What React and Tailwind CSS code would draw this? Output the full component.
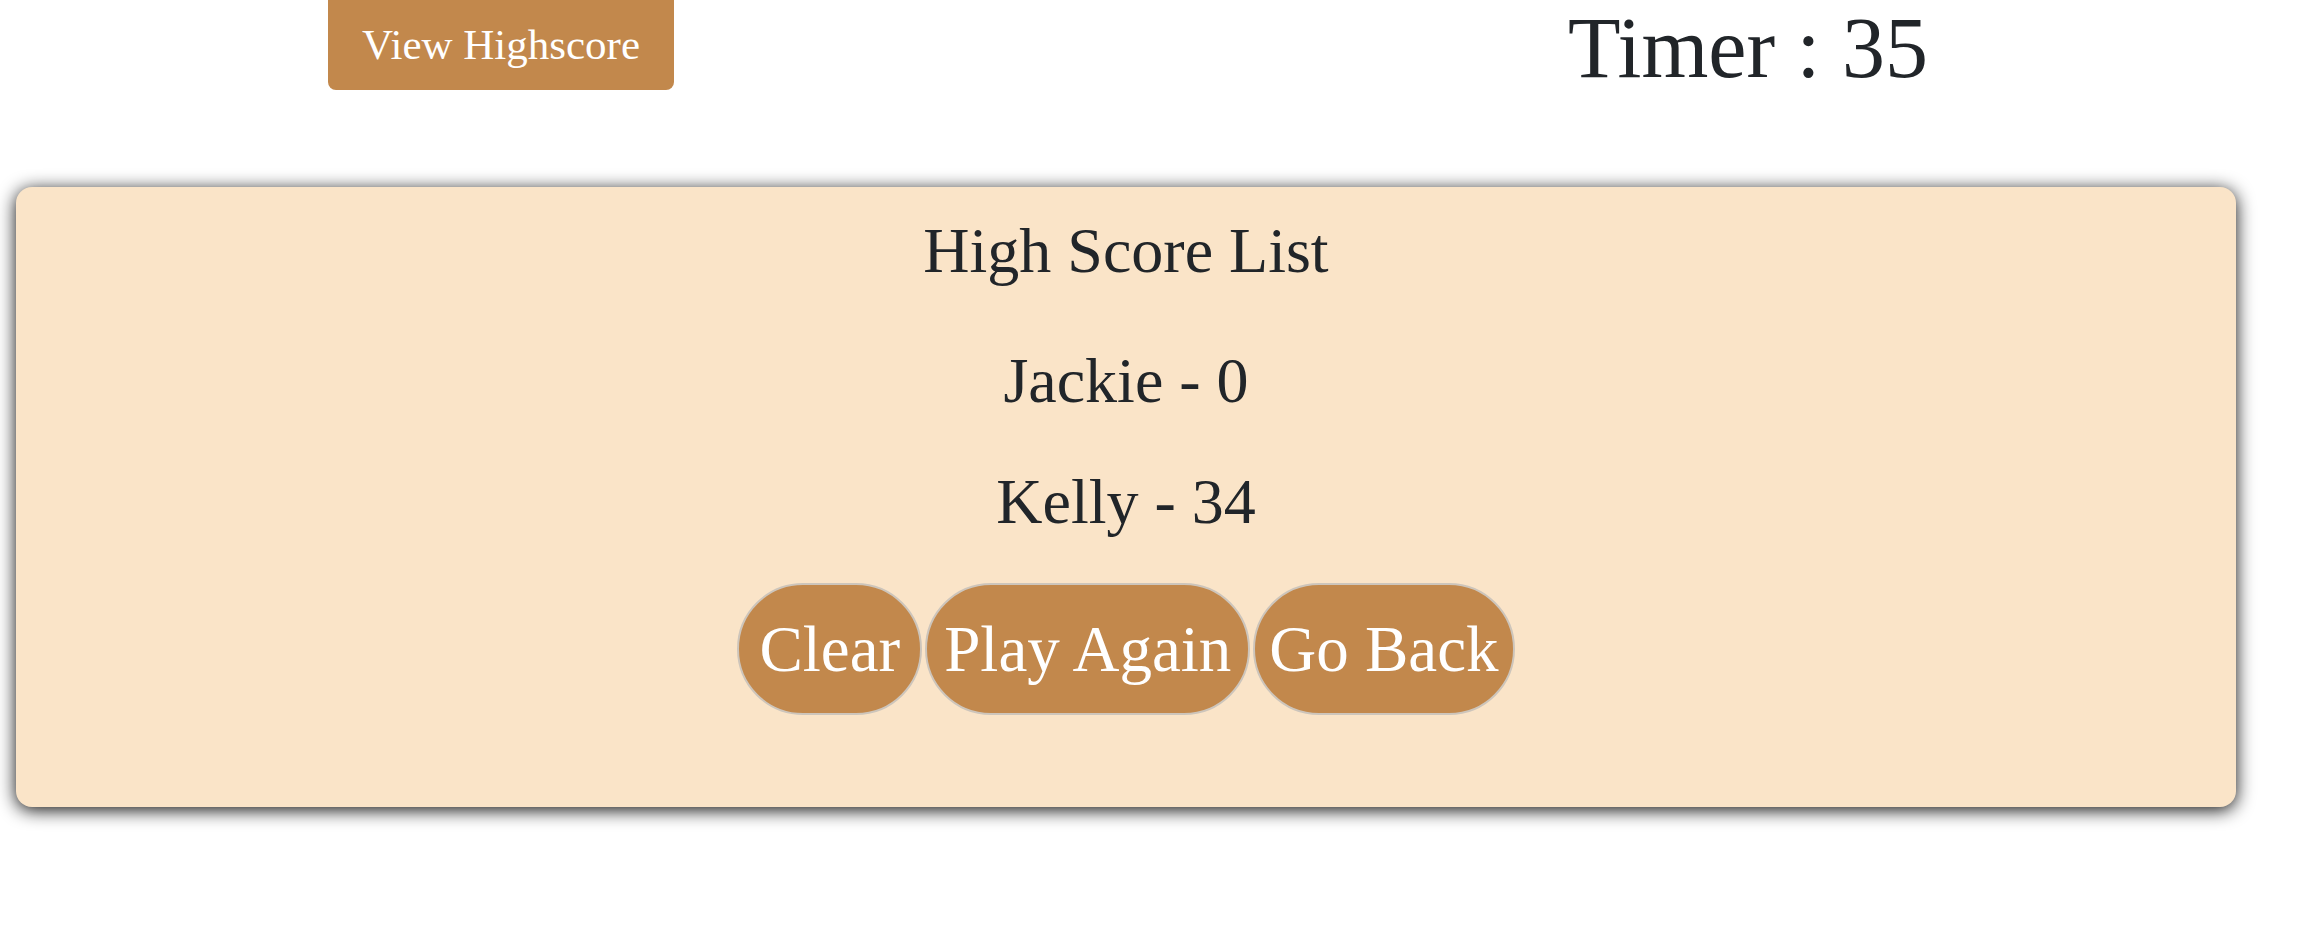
import React, { useState } from "react";

const serif = { fontFamily: '"Liberation Serif", "Times New Roman", serif' };

const App = () => {
  const [time] = useState(35);
  const scores = [
    { name: "Jackie", score: 0 },
    { name: "Kelly", score: 34 },
  ];

  return (
    <div className="min-h-[930px] w-[2316px] bg-white text-[#212529]" style={serif}>
      {/* header */}
      <div className="flex items-start">
        <button className="ml-[328px] flex h-[90px] w-[346px] items-center justify-center rounded-b-[8px] bg-[#c2884c] text-[43px] text-white">
          View Highscore
        </button>
        <div className="ml-[894px] pt-[5px] text-[86px] leading-none">Timer : {time}</div>
      </div>

      {/* high score card */}
      <div className="ml-[16px] mt-[96px] flex w-[2220px] flex-col items-center rounded-[16px] bg-[#fae4c8] pt-[32px] pb-[92px] shadow-[0_3px_18px_rgba(0,0,0,0.95)]">
        <h2 className="text-[64px] leading-none">High Score List</h2>
        <p className="mt-[66px] text-[64px] leading-none">
          {scores[0].name} - {scores[0].score}
        </p>
        <p className="mt-[57px] text-[64px] leading-none">
          {scores[1].name} - {scores[1].score}
        </p>
        <div className="mt-[49px] flex gap-[3px]">
          <button className="flex h-[132px] items-center justify-center rounded-full border-2 border-[#cdc5bb] bg-[#c2884c] px-[20px] text-[65px] leading-none text-white">
            Clear
          </button>
          <button className="flex h-[132px] items-center justify-center rounded-full border-2 border-[#cdc5bb] bg-[#c2884c] px-[17px] text-[65px] leading-none text-white">
            Play Again
          </button>
          <button className="flex h-[132px] items-center justify-center rounded-full border-2 border-[#cdc5bb] bg-[#c2884c] px-[14px] text-[65px] leading-none text-white">
            Go Back
          </button>
        </div>
      </div>
    </div>
  );
};

export default App;
